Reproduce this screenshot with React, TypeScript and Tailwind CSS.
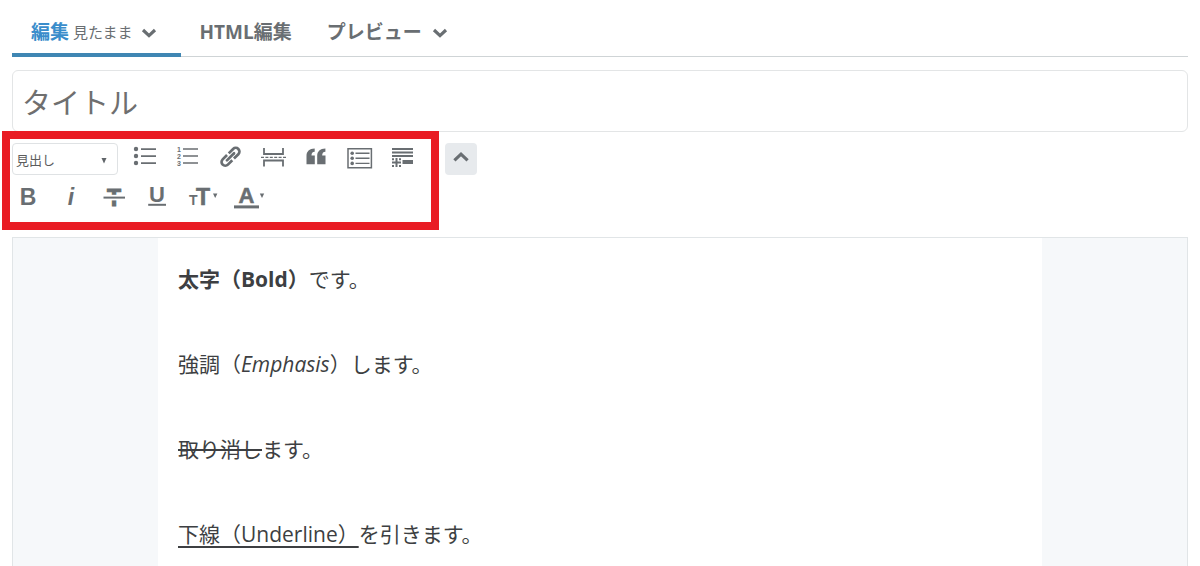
import React, { useState } from "react";

const iconFont = "font-['Liberation_Sans',sans-serif] font-bold";

function Chevron({ up = false }: { up?: boolean }) {
  return (
    <svg width="16" height="12" viewBox="0 0 16 12" fill="none" stroke="currentColor" strokeWidth="3.2" aria-hidden="true">
      <path d={up ? "M1.4 9.4 8 3.2 14.6 9.4" : "M2 3 8 8.6 14 3"} />
    </svg>
  );
}

function Tab({ active = false, children }: { active?: boolean; children: React.ReactNode }) {
  return (
    <button
      type="button"
      role="tab"
      aria-selected={active}
      className={`-mb-px flex h-[57px] items-center border-b-4 pt-3 pl-[19px] text-[19px] font-bold whitespace-nowrap ${
        active ? "border-[#3f86b3] pr-6 text-[#3a8dcb]" : "border-transparent pr-4 text-[#696e72]"
      }`}
    >
      {children}
    </button>
  );
}

function Tool({ label, children }: { label: string; children: React.ReactNode }) {
  return (
    <button type="button" aria-label={label} title={label} className="flex h-7 w-8 items-center justify-center">
      {children}
    </button>
  );
}

function Icon({ width = 24, children }: { width?: number; children: React.ReactNode }) {
  return (
    <svg width={width} height="24" viewBox={`0 0 ${width} 24`} fill="currentColor" className="shrink-0 overflow-visible" aria-hidden="true">
      {children}
    </svg>
  );
}

export default function App() {
  const [title, setTitle] = useState("");
  const [open, setOpen] = useState(true);

  return (
    <div className="flex min-h-screen flex-col bg-white px-3 font-['Open_Sans','Noto_Sans_CJK_JP',sans-serif] text-[#696e72]">
      <nav role="tablist" className="flex border-b border-[#cfd4d6]">
        <Tab active>
          編集
          <span className="mr-2 ml-1 text-[15px] font-normal text-[#696e72]">見たまま</span>
          <span className="text-[#696e72]"><Chevron /></span>
        </Tab>
        <Tab>HTML編集</Tab>
        <Tab>
          <span className="mr-[10px]">プレビュー</span>
          <Chevron />
        </Tab>
      </nav>

      <input
        type="text"
        aria-label="タイトル"
        placeholder="タイトル"
        value={title}
        onChange={(e) => setTitle(e.target.value)}
        className="mt-[13px] h-[62px] w-full rounded-md border border-[#e3e5e6] pt-0.5 pr-3 pl-[9px] text-[29px] text-[#454545] outline-none placeholder:text-[#6f6f6f]"
      />

      <div className="relative mt-[11px] flex items-start">
        <div className="pointer-events-none absolute -top-3 -left-[10px] h-[99px] w-[437px] border-8 border-[#e91c24]" />

        <div className="w-[433px]">
          <div className="flex h-8 items-start gap-[11px]">
            <div className="relative w-[106px]">
              <select aria-label="見出し" className="h-8 w-full appearance-none rounded-sm border border-[#dfe2e4] bg-white pt-1 pl-[3px] text-[13px] text-[#5c5c5c]">
                <option>見出し</option>
                <option>大見出し</option>
                <option>中見出し</option>
                <option>小見出し</option>
              </select>
              <svg width="6" height="6" viewBox="0 0 6 6" fill="#5f6468" className="pointer-events-none absolute top-[15px] right-[11px]" aria-hidden="true">
                <path d="M.5 0h5L3 5.4z" />
              </svg>
            </div>

            <Tool label="リスト">
              <Icon>
                <circle cx="3" cy="4" r="2.2" />
                <circle cx="3" cy="11" r="2.2" />
                <circle cx="3" cy="18" r="2.2" />
                <path d="M8 3.2h15v1.7H8zM8 10.2h15v1.7H8zM8 17.2h15v1.7H8z" />
              </Icon>
            </Tool>
            <Tool label="番号付きリスト">
              <Icon>
                <g className={`${iconFont} text-[7px]`}>
                  <text x="1" y="6.5">1</text>
                  <text x="1" y="13.5">2</text>
                  <text x="1" y="20.5">3</text>
                </g>
                <path d="M7 3.2h15v1.6H7zM7 10.2h15v1.6H7zM7 17.2h15v1.6H7z" />
              </Icon>
            </Tool>
            <Tool label="リンク">
              <Icon>
                <g transform="translate(11.5 11.8) rotate(-45)" fill="none" stroke="currentColor" strokeWidth="2.7">
                  <path d="M-1.2-3.7H-7.4a3.7 3.7 0 0 0 0 7.4H-1.2M1.2-3.7H7.4a3.7 3.7 0 0 1 0 7.4H1.2" />
                  <path d="M-5 0H5" strokeLinecap="round" />
                </g>
              </Icon>
            </Tool>
            <Tool label="区切り線">
              <Icon>
                <g fill="none" stroke="currentColor" strokeWidth="1.8">
                  <path d="M2 3v6h19V3M2 21.5v-6h19v6" />
                  <path d="M-1 12.3h25" strokeWidth="1.2" strokeDasharray="3 1.4" />
                </g>
              </Icon>
            </Tool>
            <Tool label="引用">
              <Icon>
                <path d="M1.5 19.2v-8.4c0-4.2 2.9-7 8.2-7.2v3.2c-2.3.2-3.2 1.5-3.2 3.6h3.3v8.8z" />
                <path d="M12.2 19.2v-8.4c0-4.2 2.9-7 8.2-7.2v3.2c-2.3.2-3.2 1.5-3.2 3.6h3.3v8.8z" />
              </Icon>
            </Tool>
            <Tool label="目次">
              <Icon>
                <path d="M0 3.8h23.4v19H0z" fill="none" stroke="currentColor" strokeWidth="1.5" />
                <circle cx="4.2" cy="8.2" r="1.8" />
                <circle cx="4.2" cy="13.2" r="1.8" />
                <circle cx="4.2" cy="18.4" r="1.8" />
                <path d="M7.5 7.5h14v1.4h-14zM7.5 12.5h14v1.4h-14zM7.5 17.7h14v1.4h-14z" />
              </Icon>
            </Tool>
            <Tool label="続きを読む">
              <Icon>
                <path d="M1 3h21v2H1zM1 6.5h21v2H1zM1 10h21v2H1zM11.5 15h10.5v4H11.5z" />
                <path d="M1 17.5h9M5.5 13v9" fill="none" stroke="currentColor" strokeWidth="2" />
                <path d="M1 13.2h2v2H1zM8 13.2h2v2H8zM1 20h2v2H1zM8 20h2v2H8z" />
              </Icon>
            </Tool>
          </div>

          {open && (
            <div className="mt-2 flex items-center gap-[11px]">
              <Tool label="太字">
                <Icon>
                  <text x="12" y="20" textAnchor="middle" className={`${iconFont} text-[23px]`}>B</text>
                </Icon>
              </Tool>
              <Tool label="斜体">
                <Icon>
                  <text x="12" y="20" textAnchor="middle" className={`${iconFont} text-[23px] italic`}>i</text>
                </Icon>
              </Tool>
              <Tool label="取り消し線">
                <Icon>
                  <text x="12" y="20.5" textAnchor="middle" stroke="currentColor" strokeWidth="1" className={`${iconFont} text-[23px]`}>T</text>
                  <path d="M1 9.8h22v5.6H1z" fill="#fff" />
                  <path d="M1.5 11.6h21.5v2H1.5z" />
                </Icon>
              </Tool>
              <Tool label="下線">
                <Icon>
                  <text x="12" y="17" textAnchor="middle" className={`${iconFont} text-[22px]`}>U</text>
                  <path d="M3.2 18.8h17.8v2H3.2z" />
                </Icon>
              </Tool>
              <button type="button" aria-label="文字サイズ" title="文字サイズ" className="flex h-7 w-[38px] items-center justify-center">
                <Icon width={28}>
                  <text x="0" y="20" className={`${iconFont} text-[14px]`}>T</text>
                  <text x="7" y="20" stroke="currentColor" strokeWidth=".6" className={`${iconFont} text-[23px]`}>T</text>
                  <path d="M24 8.5h4.4l-2.2 4.4z" />
                </Icon>
              </button>
              <button type="button" aria-label="文字色" title="文字色" className="flex h-7 w-[34px] items-center justify-center">
                <Icon width={32}>
                  <text x="12.5" y="18.4" textAnchor="middle" stroke="currentColor" strokeWidth=".5" className={`${iconFont} text-[22px]`}>A</text>
                  <path d="M0 20.4h25v3H0z" />
                  <path d="M25.8 8.5h4.4l-2.2 4.4z" />
                </Icon>
              </button>
            </div>
          )}
        </div>

        <button
          type="button"
          aria-label="ツールバーを折りたたむ"
          aria-expanded={open}
          onClick={() => setOpen(!open)}
          className="flex size-8 items-center justify-center rounded-sm bg-[#e7eaed] pb-1"
        >
          <Chevron up={open} />
        </button>
      </div>

      <main className="mt-[26px] flex flex-1 border border-b-0 border-[#e1e5e7] bg-[#f6f8fa]">
        <article className="mx-auto flex w-full max-w-[884px] flex-col gap-[43px] bg-white px-5 pt-5 text-[21px] leading-[42px] text-[#3d3f42]">
          <p><strong className="font-bold">太字（Bold）</strong>です。</p>
          <p>強調（<em>Emphasis</em>）します。</p>
          <p><del className="decoration-2">取り消し</del>ます。</p>
          <p><u className="decoration-2 underline-offset-4 [text-decoration-skip-ink:none]">下線（Underline）</u>を引きます。</p>
        </article>
      </main>
    </div>
  );
}
